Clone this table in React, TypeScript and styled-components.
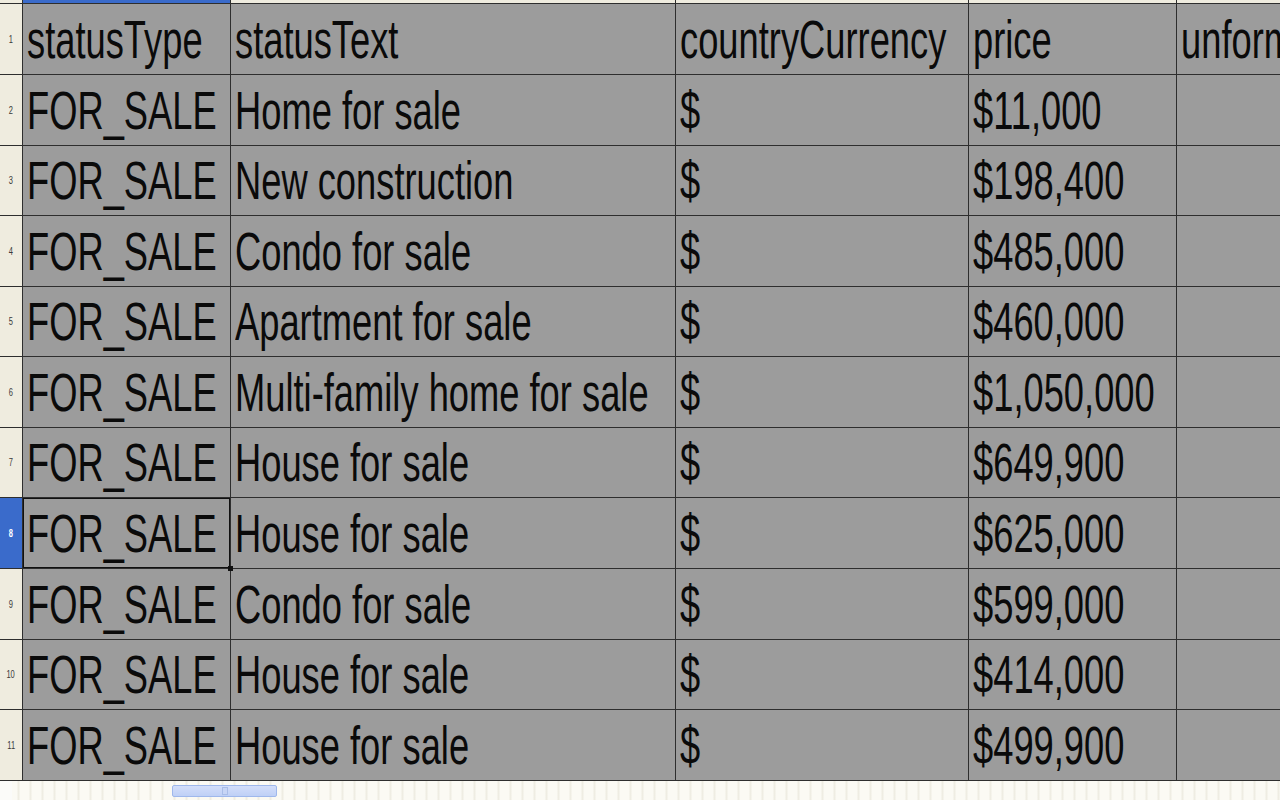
import React from "react";
import styled, { createGlobalStyle } from "styled-components";

const GlobalStyle = createGlobalStyle`
  html, body { margin: 0; padding: 0; background: #f7f5ee; overflow: hidden; }
  #root { width: 1280px; height: 800px; }
`;

const Sheet = styled.div`
  width: 1280px;
  height: 800px;
  display: flex;
  flex-direction: column;
  overflow: hidden;
`;

const Grid = styled.div`
  display: grid;
  grid-template-columns: 22px 207px 444px 292px 207px minmax(0, 1fr);
  grid-template-rows: 3px 70px 70px 69px 70px 69px 70px 69px 70px 70px 69px 70px;
  gap: 1px;
  background: #2e2e2e;
  border-bottom: 1px solid #2e2e2e;
`;

const ColHead = styled.div<{ $active?: boolean }>`
  background: ${(p) => (p.$active ? "#3a6bcb" : "#efecdf")};
`;

const RowHead = styled.div<{ $active?: boolean }>`
  background: ${(p) => (p.$active ? "#3a6bcb" : "#efecdf")};
  color: ${(p) => (p.$active ? "#ffffff" : "#3a3a3a")};
  font-family: "Liberation Sans", Arial, sans-serif;
  font-size: 10px;
  font-weight: ${(p) => (p.$active ? 700 : 400)};
  display: flex;
  align-items: center;
  justify-content: center;
  span { display: inline-block; transform: scaleX(0.75); }
`;

const Cell = styled.div<{ $cursor?: boolean }>`
  position: relative;
  background: #9c9c9c;
  display: flex;
  align-items: flex-end;
  padding: 0 0 8px 4px;
  overflow: ${(p) => (p.$cursor ? "visible" : "hidden")};
  min-width: 0;
  box-shadow: ${(p) => (p.$cursor ? "inset 0 0 0 1px #111" : "none")};
`;

const Text = styled.span`
  display: inline-block;
  font-family: "Liberation Sans", Arial, sans-serif;
  font-size: 53px;
  line-height: 53px;
  color: #0a0a0a;
  white-space: nowrap;
  transform: scaleX(0.685);
  transform-origin: left bottom;
`;

const Handle = styled.div`
  position: absolute;
  right: -3px;
  bottom: -3px;
  width: 5px;
  height: 5px;
  background: #111;
  z-index: 2;
`;

const ScrollBar = styled.div`
  flex: 1;
  position: relative;
  background:
    linear-gradient(90deg, #fbfbf9 0 12px, transparent 12px),
    repeating-linear-gradient(90deg, #fbfaf4 0 5px, #efede3 6px 7px, #fbfaf4 8px 12px);
  display: flex;
  align-items: center;
  padding-left: 172px;
`;

const Thumb = styled.div`
  width: 105px;
  height: 12px;
  box-sizing: border-box;
  background: linear-gradient(#d3defa, #bfd0f6);
  border: 1px solid #9fb8ec;
  border-radius: 2px;
  display: flex;
  align-items: center;
  justify-content: center;
`;

const Grip = styled.div`
  width: 4px;
  height: 6px;
  border: 1px solid #a9bde8;
  background: #c7d5f6;
`;

const rows: string[][] = [
  ["statusType", "statusText", "countryCurrency", "price", "unformattedPrice"],
  ["FOR_SALE", "Home for sale", "$", "$11,000", ""],
  ["FOR_SALE", "New construction", "$", "$198,400", ""],
  ["FOR_SALE", "Condo for sale", "$", "$485,000", ""],
  ["FOR_SALE", "Apartment for sale", "$", "$460,000", ""],
  ["FOR_SALE", "Multi-family home for sale", "$", "$1,050,000", ""],
  ["FOR_SALE", "House for sale", "$", "$649,900", ""],
  ["FOR_SALE", "House for sale", "$", "$625,000", ""],
  ["FOR_SALE", "Condo for sale", "$", "$599,000", ""],
  ["FOR_SALE", "House for sale", "$", "$414,000", ""],
  ["FOR_SALE", "House for sale", "$", "$499,900", ""],
];

export default function App() {
  return (
    <Sheet>
      <GlobalStyle />
      <Grid>
        <ColHead />
        <ColHead $active />
        <ColHead />
        <ColHead />
        <ColHead />
        <ColHead />
        {rows.map((r, i) => (
          <React.Fragment key={i}>
            <RowHead $active={i === 7}>
              <span>{i + 1}</span>
            </RowHead>
            {r.map((c, j) => {
              const cursor = i === 7 && j === 0;
              return (
                <Cell key={j} $cursor={cursor}>
                  {c && <Text>{c}</Text>}
                  {cursor && <Handle />}
                </Cell>
              );
            })}
          </React.Fragment>
        ))}
      </Grid>
      <ScrollBar>
        <Thumb>
          <Grip />
        </Thumb>
      </ScrollBar>
    </Sheet>
  );
}
